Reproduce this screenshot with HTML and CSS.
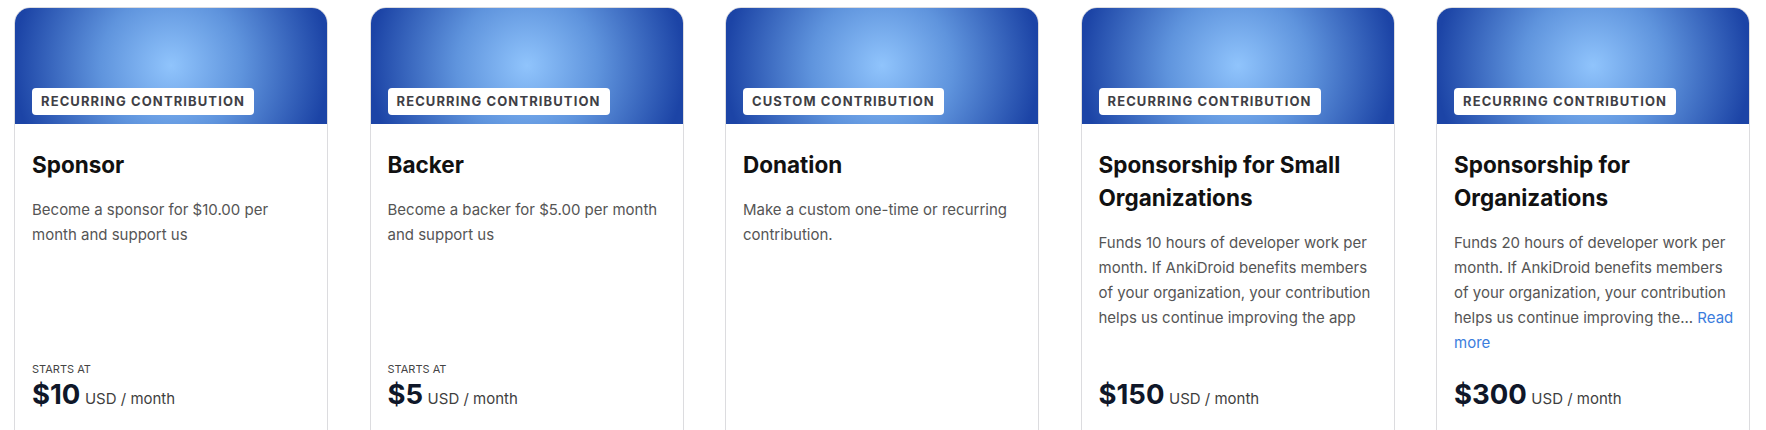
FILE: index.html
```html
<!DOCTYPE html>
<html lang="en">
<head>
<meta charset="utf-8">
<title>Contribute</title>
<link rel="stylesheet" href="styles.css">
</head>
<body>
<div class="tiers">
  <div class="card">
    <div class="card-head"><span class="badge">Recurring contribution</span></div>
    <div class="card-body">
      <h3 class="title">Sponsor</h3>
      <p class="desc">Become a sponsor for $10.00 per month and support us</p>
      <div class="price">
        <div class="starts">STARTS AT</div>
        <div class="amount"><strong>$10</strong> <span class="unit">USD / month</span></div>
      </div>
    </div>
  </div>
  <div class="card">
    <div class="card-head"><span class="badge">Recurring contribution</span></div>
    <div class="card-body">
      <h3 class="title">Backer</h3>
      <p class="desc">Become a backer for $5.00 per month and support us</p>
      <div class="price">
        <div class="starts">STARTS AT</div>
        <div class="amount"><strong>$5</strong> <span class="unit">USD / month</span></div>
      </div>
    </div>
  </div>
  <div class="card">
    <div class="card-head"><span class="badge">Custom contribution</span></div>
    <div class="card-body">
      <h3 class="title">Donation</h3>
      <p class="desc">Make a custom one-time or recurring contribution.</p>
    </div>
  </div>
  <div class="card">
    <div class="card-head"><span class="badge">Recurring contribution</span></div>
    <div class="card-body">
      <h3 class="title">Sponsorship for Small Organizations</h3>
      <p class="desc">Funds 10 hours of developer work per month. If AnkiDroid benefits members of your organization, your contribution helps us continue improving the app</p>
      <div class="price">
        <div class="amount"><strong>$150</strong> <span class="unit">USD / month</span></div>
      </div>
    </div>
  </div>
  <div class="card">
    <div class="card-head"><span class="badge">Recurring contribution</span></div>
    <div class="card-body">
      <h3 class="title">Sponsorship for Organizations</h3>
      <p class="desc">Funds 20 hours of developer work per month. If AnkiDroid benefits members of your organization, your contribution helps us continue improving the... <a class="more" href="#">Read more</a></p>
      <div class="price">
        <div class="amount"><strong>$300</strong> <span class="unit">USD / month</span></div>
      </div>
    </div>
  </div>
</div>
</body>
</html>
```
FILE: styles.css
```css
* { box-sizing: border-box; }
html, body { margin: 0; padding: 0; background: #fff; overflow: hidden; }
body { font-family: Inter, "Noto Sans", "Liberation Sans", sans-serif; color: #111; }

.tiers {
  display: flex;
  gap: 41.5px;
  padding: 7px 0 0 14px;
}

.card {
  width: 314px;
  height: 440px;
  flex: none;
  display: flex;
  flex-direction: column;
  border: 1px solid #dcdcdf;
  border-radius: 16px;
  overflow: hidden;
  background: #fff;
}

.card-head {
  height: 117px;
  margin: -1px -1px 0;
  flex: none;
  display: flex;
  align-items: flex-end;
  padding: 0 0 9px 18px;
  background: radial-gradient(circle farthest-side at 50% 50%, #90c4fc 0%, #5f94dd 45%, #1c44a6 100%);
  border-radius: 16px 16px 0 0;
}

.badge {
  display: inline-block;
  background: #fff;
  color: #3f3f46;
  font-size: 13px;
  font-weight: 700;
  letter-spacing: 1.1px;
  text-transform: uppercase;
  line-height: 27px;
  height: 27px;
  padding: 0 9px;
  border-radius: 4px;
}

.card-body {
  flex: 1;
  display: flex;
  flex-direction: column;
  padding: 24px 17px 30px;
}

.title {
  margin: 0;
  font-size: 22.5px;
  font-weight: 700;
  line-height: 33px;
  color: #111;
}

.desc {
  margin: 16px -2px 0 0;
  font-size: 15px;
  line-height: 25px;
  color: #555;
}

.more { color: #3b7ddd; text-decoration: none; }

.price { margin-top: auto; }

.starts {
  font-size: 11px;
  line-height: 16px;
  color: #444;
}

.amount {
  line-height: 34px;
  color: #3f3f3f;
}

.amount strong {
  font-size: 27.5px;
  font-weight: 700;
  color: #0f1729;
}

.unit { font-size: 15px; }
```
